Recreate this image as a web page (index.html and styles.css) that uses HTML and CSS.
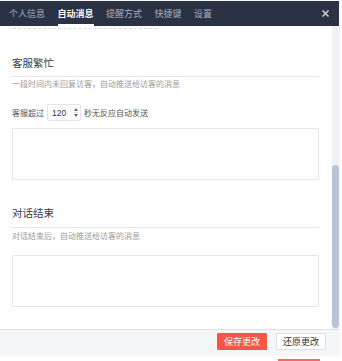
FILE: index.html
```html
<!DOCTYPE html>
<html lang="zh">
<head>
<meta charset="utf-8">
<link rel="stylesheet" href="styles.css">
</head>
<body>
<div class="dialog">
  <div class="header">
    <div class="tabs">
      <span class="tab">个人信息</span>
      <span class="tab active">自动消息</span>
      <span class="tab">提醒方式</span>
      <span class="tab">快捷键</span>
      <span class="tab">设置</span>
    </div>
    <span class="close"><svg width="7" height="7" viewBox="0 0 7 7"><path d="M0.5 0.5L6.5 6.5M6.5 0.5L0.5 6.5" stroke="#d3d7df" stroke-width="1.4" fill="none"/></svg></span>
  </div>
  <div class="main">
    <div class="content">
      <div class="dashed"></div>
      <div class="title first">客服繁忙</div>
      <div class="rule"></div>
      <div class="desc">一段时间内未回复访客，自动推送给访客的消息</div>
      <div class="row">
        <span>客服超过</span>
        <span class="num">
          <span class="val">120</span>
          <span class="spin"><span class="up"></span><span class="sep"></span><span class="down"></span></span>
        </span>
        <span>秒无反应自动发送</span>
      </div>
      <div class="area a1"></div>
      <div class="title second">对话结束</div>
      <div class="rule r2"></div>
      <div class="desc d2">对话结束后，自动推送给访客的消息</div>
      <div class="area a2"></div>
    </div>
    <div class="track"><div class="thumb"></div></div>
  </div>
  <div class="footer">
    <button class="btn save">保存更改</button>
    <button class="btn reset">还原更改</button>
  </div>
</div>
<div class="under"><div class="frag"></div></div>
</body>
</html>
```
FILE: styles.css
```css
html, body {
  margin: 0;
  padding: 0;
  background: #ffffff;
  font-family: "Noto Sans CJK SC", "Noto Sans", sans-serif;
  overflow: hidden;
}
.dialog {
  width: 339px;
  margin-top: 1px;
  box-shadow: 0 0 3px rgba(0,0,0,0.08);
}
.header {
  height: 25px;
  background: #2b3246;
  display: flex;
  align-items: stretch;
  padding-left: 9px;
}
.tabs {
  display: flex;
  gap: 12.5px;
}
.tab {
  font-size: 9px;
  color: #a9aebb;
  display: flex;
  align-items: center;
  padding-top: 1px;
  border-bottom: 2px solid transparent;
  box-sizing: border-box;
  height: 25px;
}
.tab.active {
  color: #ffffff;
  font-weight: bold;
  border-bottom-color: #ffffff;
}
.close {
  margin-left: auto;
  margin-right: 10px;
  display: flex;
  align-items: center;
}
.main {
  display: flex;
  height: 303px;
  background: #ffffff;
}
.content {
  flex: 1;
  padding: 0 13px 0 12px;
  overflow: hidden;
}
.dashed {
  margin-top: 2px;
  margin-left: 1px;
  width: 144px;
  border-top: 1px dashed #d9dce2;
}
.title {
  font-size: 10.5px;
  line-height: 14px;
  color: #3a3a3a;
}
.title.first { margin-top: 27px; }
.title.second { margin-top: 26px; }
.rule {
  margin-top: 6px;
  border-top: 1px solid #e3e6eb;
}
.rule.r2 { margin-top: 7px; }
.desc {
  margin-top: 2px;
  font-size: 8px;
  line-height: 10px;
  color: #999999;
}
.desc.d2 { margin-top: 3px; }
.row {
  margin-top: 15px;
  height: 17px;
  display: flex;
  align-items: center;
  gap: 2px;
  font-size: 8px;
  color: #555555;
}
.num {
  width: 34px;
  height: 17px;
  box-sizing: border-box;
  border: 1px solid #e1e4ea;
  border-radius: 2px;
  display: flex;
  align-items: center;
  justify-content: space-between;
  padding: 0 2px 0 4px;
  margin: 0 1px;
  background: #fff;
}
.val {
  font-family: "Liberation Sans", Arial, sans-serif;
  font-size: 8.5px;
  color: #333;
}
.spin {
  display: flex;
  flex-direction: column;
  align-items: center;
  gap: 1px;
}
.up {
  width: 0; height: 0;
  border-left: 2px solid transparent;
  border-right: 2px solid transparent;
  border-bottom: 3px solid #666;
}
.down {
  width: 0; height: 0;
  border-left: 2px solid transparent;
  border-right: 2px solid transparent;
  border-top: 3px solid #666;
}
.sep {
  width: 5px;
  border-top: 1px solid #e1e4ea;
}
.area {
  height: 52px;
  box-sizing: border-box;
  border: 1px solid #e3e6ec;
  border-radius: 1px;
}
.a1 { margin-top: 7px; }
.a2 { margin-top: 14px; }
.track {
  width: 7px;
  background: #eff1f4;
}
.thumb {
  margin-top: 139px;
  height: 163px;
  background: #b8c5d6;
  border-radius: 4px;
}
.footer {
  height: 26px;
  box-sizing: border-box;
  border-top: 1px solid #dde1e8;
  background: #f5f6f8;
  display: flex;
  justify-content: flex-end;
  align-items: flex-start;
  padding: 3px 13px 0 0;
  gap: 9px;
}
.btn {
  width: 50px;
  height: 17px;
  box-sizing: border-box;
  font-family: "Noto Sans CJK SC", sans-serif;
  font-size: 9px;
  padding: 0;
  border-radius: 1px;
  line-height: 15px;
}
.save {
  background: #f5564a;
  color: #ffffff;
  border: 1px solid #f5564a;
}
.reset {
  background: #ffffff;
  color: #333333;
  border: 1px solid #dcdfe6;
}
.under {
  height: 10px;
  display: flex;
  justify-content: flex-end;
  padding-right: 22px;
}
.frag {
  width: 42px;
  height: 6px;
  margin-top: 4px;
  background: #f36b5e;
}
```
